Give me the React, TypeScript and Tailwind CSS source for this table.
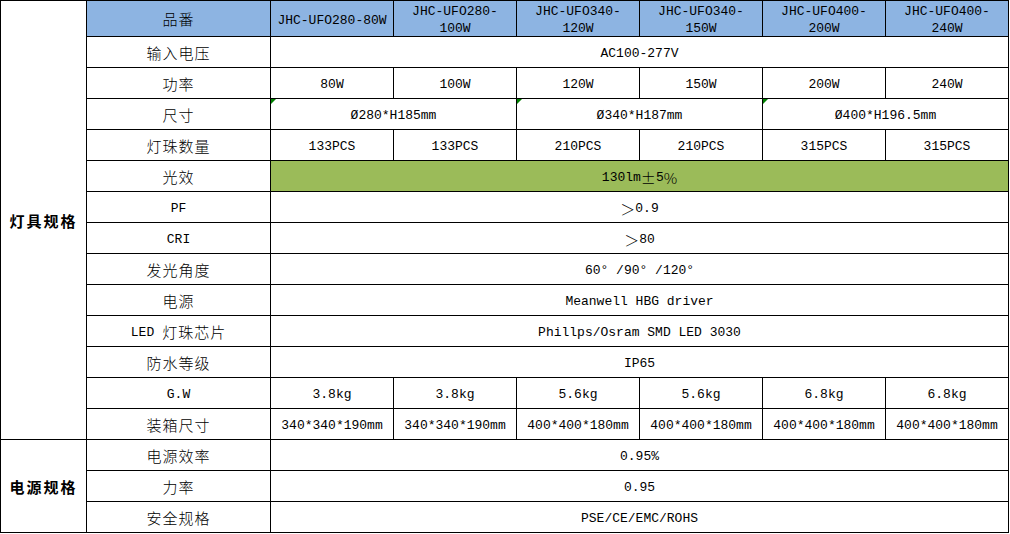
import React from "react";

const F = "font-['Liberation_Mono','Noto_Sans_CJK_SC',monospace]";
const CJK = "text-[15px] font-light tracking-[1px] font-['Noto_Sans_CJK_SC','Noto_Sans_CJK_JP',sans-serif]";

type CellProps = {
  children?: React.ReactNode;
  className?: string;
  span?: string;
  tri?: boolean;
  pad?: boolean;
};

function Cell({ children, className = "", span = "", tri = false, pad = true }: CellProps) {
  return (
    <div
      className={`relative flex items-center justify-center bg-white text-black text-[13px] leading-[17px] text-center ${F} ${pad ? "pt-[3px]" : ""} ${span} ${className}`}
    >
      {tri && (
        <span className="absolute left-0 top-0 w-0 h-0 border-t-[5px] border-t-[#008000] border-r-[5px] border-r-transparent" />
      )}
      {children}
    </div>
  );
}

function Label({ children }: { children: React.ReactNode }) {
  return (
    <Cell pad={false}>
      <span className={CJK}>{children}</span>
    </Cell>
  );
}

function Full({ children, green = false }: { children: React.ReactNode; green?: boolean }) {
  return (
    <Cell span="col-span-6" className={green ? "!bg-[#9BBB59]" : ""}>
      {children}
    </Cell>
  );
}

function Six({ v }: { v: string[] }) {
  return (
    <>
      {v.map((x, i) => (
        <Cell key={i}>{x}</Cell>
      ))}
    </>
  );
}

const SYM = "text-[15px] font-light font-['Noto_Sans_CJK_SC',sans-serif]";

export default function App() {
  const headers = [
    "JHC-UFO280-80W",
    "JHC-UFO280-\n100W",
    "JHC-UFO340-\n120W",
    "JHC-UFO340-\n150W",
    "JHC-UFO400-\n200W",
    "JHC-UFO400-\n240W",
  ];
  return (
    <div className="w-[1010px] h-[534px] bg-white">
      <div className="inline-grid bg-black p-px gap-px grid-cols-[85px_183px_repeat(6,122px)] grid-rows-[35px_repeat(16,30px)]">
        <Cell span="row-span-14" pad={false}>
          <span className="text-[15px] font-bold tracking-[2px] font-['Noto_Sans_CJK_SC',sans-serif]">灯具规格</span>
        </Cell>
        <Cell className="!bg-[#8DB4E2]" pad={false}>
          <span className={CJK}>品番</span>
        </Cell>
        {headers.map((h, i) => (
          <Cell key={i} className="!bg-[#8DB4E2] whitespace-pre-line">
            {h}
          </Cell>
        ))}

        <Label>输入电压</Label>
        <Full>AC100-277V</Full>

        <Label>功率</Label>
        <Six v={["80W", "100W", "120W", "150W", "200W", "240W"]} />

        <Label>尺寸</Label>
        <Cell span="col-span-2" tri>Ø280*H185mm</Cell>
        <Cell span="col-span-2" tri>Ø340*H187mm</Cell>
        <Cell span="col-span-2" tri>Ø400*H196.5mm</Cell>

        <Label>灯珠数量</Label>
        <Six v={["133PCS", "133PCS", "210PCS", "210PCS", "315PCS", "315PCS"]} />

        <Label>光效</Label>
        <Full green>
          130lm<span className={SYM}>±</span>5<span className={SYM}>%</span>
        </Full>

        <Cell>PF</Cell>
        <Full>
          <span className={SYM}>＞</span>0.9
        </Full>

        <Cell>CRI</Cell>
        <Full>
          <span className={SYM}>＞</span>80
        </Full>

        <Label>发光角度</Label>
        <Full>60° /90° /120°</Full>

        <Label>电源</Label>
        <Full>Meanwell HBG driver</Full>

        <Cell pad={false}>
          <span className="pt-[3px]">LED</span>
          <span className={`${CJK} ml-[8px]`}>灯珠芯片</span>
        </Cell>
        <Full>Phillps/Osram SMD LED 3030</Full>

        <Label>防水等级</Label>
        <Full>IP65</Full>

        <Cell>G.W</Cell>
        <Six v={["3.8kg", "3.8kg", "5.6kg", "5.6kg", "6.8kg", "6.8kg"]} />

        <Label>装箱尺寸</Label>
        <Six
          v={[
            "340*340*190mm",
            "340*340*190mm",
            "400*400*180mm",
            "400*400*180mm",
            "400*400*180mm",
            "400*400*180mm",
          ]}
        />

        <Cell span="row-span-3" pad={false}>
          <span className="text-[15px] font-bold tracking-[2px] font-['Noto_Sans_CJK_SC',sans-serif]">电源规格</span>
        </Cell>
        <Label>电源效率</Label>
        <Full>0.95%</Full>

        <Label>力率</Label>
        <Full>0.95</Full>

        <Label>安全规格</Label>
        <Full>PSE/CE/EMC/ROHS</Full>
      </div>
    </div>
  );
}
